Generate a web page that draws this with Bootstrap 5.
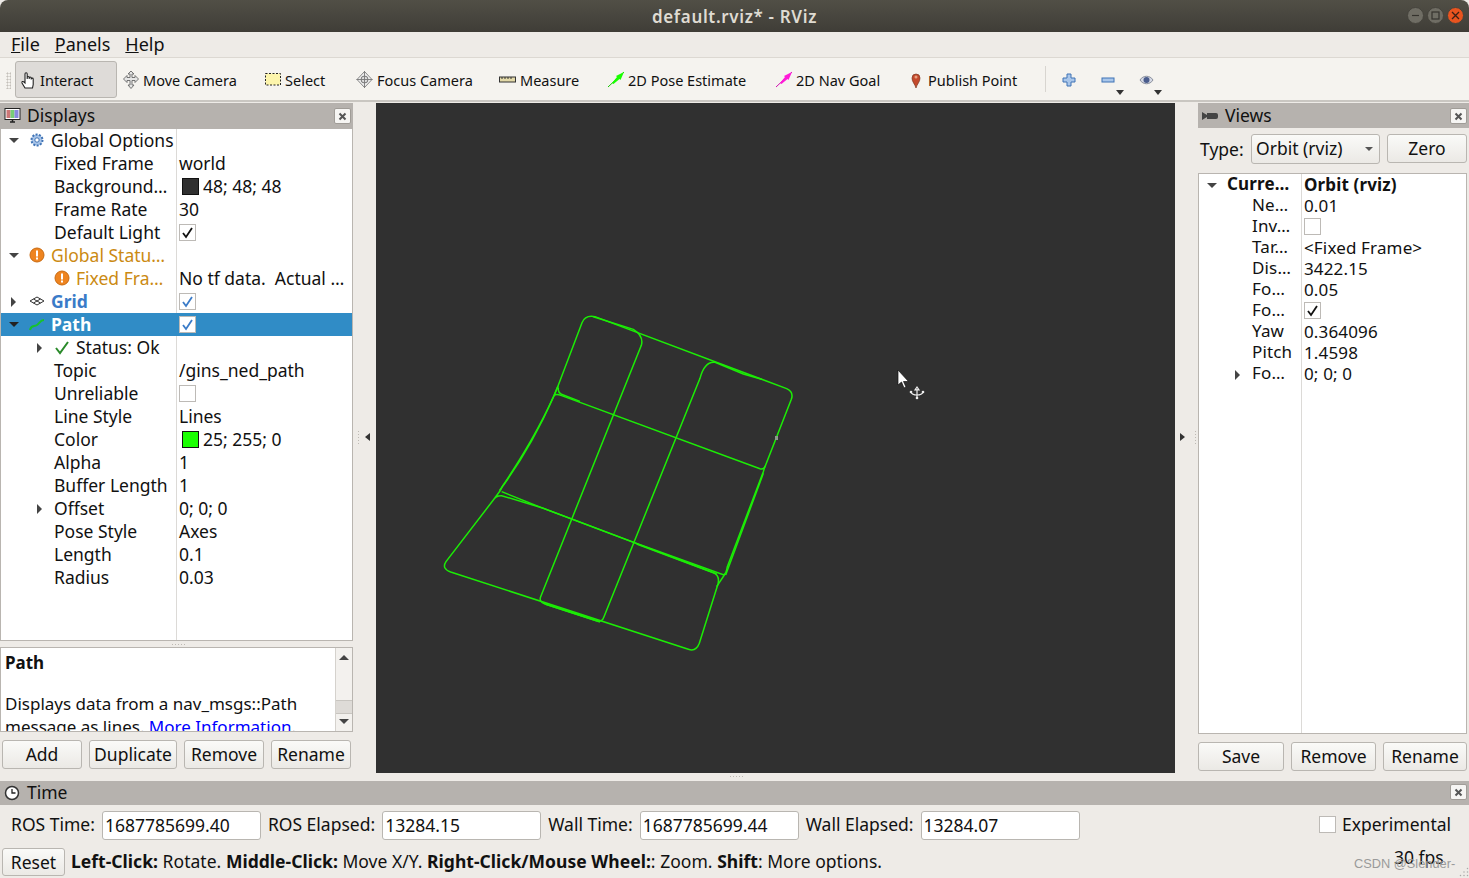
<!DOCTYPE html>
<html lang="en">
<head>
  <meta charset="UTF-8">
  <meta name="viewport" content="width=device-width, initial-scale=1.0">
  <title>default.rviz* - RViz</title>
  <link href="https://cdn.jsdelivr.net/npm/bootstrap@5.3.0/dist/css/bootstrap.min.css" rel="stylesheet">
  <style>
    html, body { height: 100%; }
    body { width: 1469px; height: 878px; overflow: hidden; background: #eeebe7; color: #111; font-family: "Noto Sans", "Open Sans", sans-serif; font-size: 17.5px; line-height: 23px; position: relative; }
    .win-title { height: 32px; background: linear-gradient(#514f46, #3f3d37); border-radius: 8px 8px 0 0; color: #dfdbd2; font-weight: 600; font-size: 17px; letter-spacing: .65px; position: relative; flex: none; }
    .win-btns { position: absolute; right: 5px; top: 7px; gap: 3px; }
    .win-btn { width: 17px; height: 17px; border-radius: 50%; background: #6f6d64; border: 1px solid #45433c; display: flex; align-items: center; justify-content: center; }
    .win-btn.shut { background: #e9541f; }
    .menu-bar { height: 26px; flex: none; padding-left: 11px; gap: 15px; font-size: 18px; border-bottom: 1px solid #dcd8d2; line-height: 25px; }
    .tool-bar { height: 44px; flex: none; background: #f5f3ef; border-bottom: 2px solid #c9c6c1; padding-left: 15px; font-size: 14.5px; }
    .tool-grip { position: absolute; left: 6px; top: 72px; width: 5px; height: 17px; background-image: radial-gradient(#c4c0ba 45%, transparent 50%); background-size: 3px 3px; }
    .tool-item { display: flex; align-items: center; flex: none; height: 37px; padding-top: 2px; }
    .tool-on { width: 102px; padding-left: 4px; margin-right: 6px; background: #dedbd8; border: 1px solid #b9b6b1; border-radius: 3px; }
    .tool-ico { width: 20px; height: 20px; flex: none; }
    .w-move { width: 142px; } .w-select { width: 91px; } .w-focus { width: 143px; } .w-measure { width: 108px; }
    .w-pose { width: 168px; } .w-nav { width: 133px; } .w-pin { width: 137px; }
    .w-focus span, .w-measure span, .w-pose span, .w-nav span { margin-left: 1px; }
    .tool-sep { width: 1px; height: 26px; background: #d8d5d0; margin-right: 16px; }
    .tool-small { width: 38px; height: 36px; position: relative; flex: none; }
    .tool-small .tool-ico { display: block; margin-top: 11px; }
    .drop-tri { position: absolute; right: 14px; bottom: 2px; width: 0; height: 0; border-left: 4px solid transparent; border-right: 4px solid transparent; border-top: 5px solid #333; }
    .work-area { height: 670px; flex: none; margin-top: 1px; }
    .dock-left { width: 353px; flex: none; }
    .dock-right { width: 271px; flex: none; }
    .dock-head { height: 26px; background: #b6b2ae; flex: none; position: relative; padding-left: 4px; padding-bottom: 2px; gap: 5px; font-size: 17.5px; line-height: 24px; }
    .dock-head svg { margin-top: 2px; }
    .head-views { height: 25px; }
    .dock-x { position: absolute; right: 2px; top: 5px; width: 17px; height: 16px; background: #f6f5f3; border: 1px solid #a09c97; border-radius: 2px; display: flex; align-items: center; justify-content: center; }
    .dock-x svg { margin: 0; }
    .prop-tree { background: #fff; border: 1px solid #b9b5b0; position: relative; }
    .tree-left { height: 512px; border-top: 0; }
    .tree-left::before, .tree-right::before { content: ""; position: absolute; top: 0; bottom: 0; width: 1px; background: #dcdad7; }
    .tree-left::before { left: 175px; }
    .tree-right::before { left: 102px; }
    .prop-row { display: flex; align-items: center; height: 23px; position: relative; white-space: nowrap; }
    .tree-right .prop-row { height: 21px; font-size: 17px; letter-spacing: .15px; }
    .prop-name { width: 176px; flex: none; position: relative; height: 100%; padding-left: 53px; line-height: 22px; }
    .tree-right .prop-name { width: 103px; padding-left: 53px; line-height: 20px; }
    .prop-val { padding-left: 2px; padding-bottom: 1px; display: flex; align-items: center; gap: 4px; }
    .lvl-top { padding-left: 50px; }
    .lvl-deep { padding-left: 75px; }
    .tree-right .lvl-top { padding-left: 28px; }
    .tree-tri { position: absolute; width: 0; height: 0; }
    .tri-down { left: 8px; top: 9px; border-left: 5px solid transparent; border-right: 5px solid transparent; border-top: 5px solid #444; }
    .tri-right { left: 10px; top: 7px; border-top: 5px solid transparent; border-bottom: 5px solid transparent; border-left: 5px solid #444; }
    .tri-deep { left: 36px; }
    .tree-ico { position: absolute; left: 28px; top: 3px; width: 17px; height: 17px; }
    .ico-deep { left: 53px; }
    .warn-txt { color: #cb8a12; }
    .grid-txt { color: #3a7bc8; font-weight: 700; }
    .row-on { background: #308cc6; color: #fff; font-weight: 700; }
    .row-on .tri-down { border-top-color: #222; }
    .chk-box { width: 17px; height: 17px; background: #fff; border: 1px solid #bdbab6; display: inline-flex; align-items: center; justify-content: center; }
    .prop-val .chk-box { margin-bottom: -1px; }
    .swatch { width: 17px; height: 17px; border: 1px solid #111; margin-left: 3px; margin-bottom: -1px; }
    .desc-box { height: 85px; margin-top: 6px; background: #fff; border: 1px solid #b9b5b0; position: relative; overflow: hidden; padding: 3px 4px; font-size: 17px; }
    .desc-box p { margin: 0; }
    .desc-gap { margin-top: 18px !important; }
    .desc-box a { color: #0000ff; text-decoration: none; }
    .scroll-col { position: absolute; right: 0; top: 0; bottom: 0; width: 17px; background: #f3f1ee; border-left: 1px solid #d5d2cd; }
    .scroll-thumb { position: absolute; left: 0; right: 0; top: 52px; height: 14px; background: #dedbd7; border-top: 1px solid #c8c5c0; border-bottom: 1px solid #c8c5c0; }
    .scroll-up, .scroll-dn { position: absolute; left: 3px; width: 0; height: 0; border-left: 5px solid transparent; border-right: 5px solid transparent; }
    .scroll-up { top: 7px; border-bottom: 5px solid #444; }
    .scroll-dn { bottom: 7px; border-top: 5px solid #444; }
    .rv-btn { background: linear-gradient(#fafaf8, #ebe9e5); border: 1px solid #b9b6b1; border-radius: 3px; padding: 0 0 1px; color: #111; font-size: 17.5px; line-height: 26px; height: 29px; flex: none; }
    .btn-row-left { margin-top: 8px; padding-left: 2px; gap: 7px; }
    .w-add { width: 80px; } .w-dup { width: 88px; } .w-rem { width: 80px; } .w-ren { width: 80px; }
    .centre-gap { width: 23px; flex: none; position: relative; }
    .side-arrow { position: absolute; top: 330px; width: 0; height: 0; border-top: 4px solid transparent; border-bottom: 4px solid transparent; }
    .arrow-l { left: 12px; border-right: 5px solid #333; }
    .arrow-r { left: 5px; border-left: 5px solid #333; }
    .grip-v { position: absolute; top: 327px; width: 3px; height: 15px; background-image: radial-gradient(#bdb9b3 40%, transparent 45%); background-size: 3px 3px; }
    .grip-left { left: 4px; }
    .grip-right { left: 19px; }
    .grip-h { position: absolute; width: 15px; height: 3px; background-image: radial-gradient(#bdb9b3 40%, transparent 45%); background-size: 3px 3px; }
    .grip-tree { left: 171px; top: 643px; }
    .grip-time { left: 729px; top: 775px; }
    .size-grip { position: absolute; right: 0; bottom: 0; }
    .canvas-3d { width: 799px; flex: none; background: #303030; }
    .canvas-3d svg { display: block; }
    .type-row { height: 45px; padding: 6px 2px 0 2px; flex: none; }
    .type-row label { width: 51px; }
    .orbit-box { width: 129px; height: 30px; background: linear-gradient(#fafaf8, #ebe9e5); border: 1px solid #b9b6b1; border-radius: 3px; padding-left: 4px; line-height: 26px; position: relative; }
    .orbit-tri { position: absolute; right: 6px; top: 12px; width: 0; height: 0; border-left: 4px solid transparent; border-right: 4px solid transparent; border-top: 4px solid #555; }
    .w-zero { width: 80px; margin-left: 7px; }
    .tree-right { height: 561px; width: 269px; margin-bottom: 8px; }
    .btn-row-right { gap: 7px; }
    .w-save { width: 86px; } .w-rem2 { width: 85px; } .w-ren2 { width: 84px; }
    .time-head { margin-top: 8px; height: 24px; line-height: 22px; }
    .time-head .dock-x { top: 3px; }
    .time-row { height: 40px; flex: none; padding-left: 11px; gap: 7px; position: relative; }
    .time-row label { flex: none; margin-bottom: 1px; }
    .time-input { width: 159px; height: 29px; flex: none; background: #fff; border: 1px solid #b9b6b1; border-radius: 3px; padding: 0 2px 1px; font-size: 17.5px; line-height: 26px; color: #111; box-shadow: none; }
    .time-input:focus { box-shadow: none; border-color: #b9b6b1; }
    .exp-box { position: absolute; left: 1319px; top: 8px; }
    .exp-box .chk-box { margin: 0 6px 0 0; }
    .status-row { height: 33px; flex: none; padding-left: 2px; position: relative; }
    .status-text { letter-spacing: .03px; margin-bottom: 1px; }
    .w-reset { width: 63px; height: 28px; margin-right: 6px; }
    .fps-txt { position: absolute; left: 1394px; top: 1px; }
    .mark-txt { position: absolute; left: 1354px; top: 7px; font-family: "Liberation Sans", sans-serif; font-size: 12.8px; color: #9a9a9a; white-space: nowrap; }
  </style>
</head>
<body class="d-flex flex-column">

  <div class="win-title d-flex align-items-center justify-content-center">
    default.rviz* - RViz
    <div class="win-btns d-flex">
      <span class="win-btn"><svg width="9" height="9"><path d="M1 4.500h7" stroke="#35332e" stroke-width="1.200"/></svg></span>
      <span class="win-btn"><svg width="9" height="9"><rect x="1" y="1" width="7" height="7" fill="none" stroke="#35332e" stroke-width="1.200"/></svg></span>
      <span class="win-btn shut"><svg width="9" height="9"><path d="M1 1l7 7M8 1l-7 7" stroke="#3a2015" stroke-width="1.300"/></svg></span>
    </div>
  </div>

  <div class="menu-bar d-flex align-items-center">
    <span><u>F</u>ile</span><span><u>P</u>anels</span><span><u>H</u>elp</span>
  </div>

  <div class="tool-bar d-flex align-items-center">
    <div class="tool-item tool-on">
      <svg class="tool-ico" viewBox="0 0 20 20"><path d="M5 18l-3-5c-.5-1.500 1-2 2-1l1 1V4c0-1.600 2.200-1.600 2.200 0v5-1.500c0-1.300 2-1.300 2 0V9 8c0-1.300 2-1.300 2 0v1.500-.5c0-1.200 2-1.200 2 0v5.500l-.7 3.500z" fill="#fff" stroke="#222" stroke-width="1.100"/></svg>
      <span>Interact</span>
    </div>
    <div class="tool-item w-move">
      <svg class="tool-ico" viewBox="0 0 20 20"><path d="M8 1l3 3H9v3.500h3V5.500l3.500 3.500-3.500 3.500v-2H9V15h2l-3 3.500L5 15h2v-4.500H4v2L.5 9 4 5.500v2h3V4H5z" fill="#e6e6e6" stroke="#666" stroke-width=".9"/></svg>
      <span>Move Camera</span>
    </div>
    <div class="tool-item w-select">
      <svg class="tool-ico" viewBox="0 0 20 20"><rect x=".5" y="3.500" width="15" height="11.500" fill="#fdf5ac" stroke="#222" stroke-dasharray="2 1.500"/></svg>
      <span>Select</span>
    </div>
    <div class="tool-item w-focus">
      <svg class="tool-ico" viewBox="0 0 20 20"><path d="M8.500 1.500L16 9.500 8.500 17.500 1 9.500z" fill="#eee" stroke="#888"/><circle cx="8.500" cy="9.500" r="3.500" fill="#ddd" stroke="#777"/><path d="M8.500 1v17M.5 9.500h16" stroke="#777" stroke-width=".9"/></svg>
      <span>Focus Camera</span>
    </div>
    <div class="tool-item w-measure">
      <svg class="tool-ico" viewBox="0 0 20 20"><rect x=".5" y="7" width="16" height="5" fill="#e3d9a8" stroke="#333"/><path d="M3 7v2M6 7v2M9 7v2M12 7v2" stroke="#333"/></svg>
      <span>Measure</span>
    </div>
    <div class="tool-item w-pose">
      <svg class="tool-ico" viewBox="0 0 20 20"><path d="M1 17L17 2" stroke="#12c400" stroke-width="1"/><path d="M5 13l5-6-1-1 8-4-3.500 8-1-1-6 5z" fill="#19ff00"/></svg>
      <span>2D Pose Estimate</span>
    </div>
    <div class="tool-item w-nav">
      <svg class="tool-ico" viewBox="0 0 20 20"><path d="M1 17L17 2" stroke="#d010b0" stroke-width="1"/><path d="M5 13l5-6-1-1 8-4-3.500 8-1-1-6 5z" fill="#ff19d8"/></svg>
      <span>2D Nav Goal</span>
    </div>
    <div class="tool-item w-pin">
      <svg class="tool-ico" viewBox="0 0 20 20"><path d="M8 18c-1-4-4-6-4-10a4 4 0 0 1 8 0c0 4-3 6-4 10z" fill="#c4492c" stroke="#7d3a22" stroke-width=".7"/><circle cx="8" cy="7" r="1.500" fill="#e8a080"/></svg>
      <span>Publish Point</span>
    </div>
    <div class="tool-sep"></div>
    <div class="tool-small">
      <svg class="tool-ico" viewBox="0 0 20 20"><path d="M5 2h4v4h4v4H9v4H5v-4H1V6h4z" fill="#a9c6ea" stroke="#3f73b5"/></svg>
    </div>
    <div class="tool-small">
      <svg class="tool-ico" viewBox="0 0 20 20"><rect x="2" y="6" width="12" height="4" fill="#a9c6ea" stroke="#3f73b5"/></svg>
      <span class="drop-tri"></span>
    </div>
    <div class="tool-small">
      <svg class="tool-ico" viewBox="0 0 20 20"><path d="M2 8c3-5 10-5 13 0-3 5-10 5-13 0z" fill="#d4d8e4" stroke="#8a8f9c"/><circle cx="8.500" cy="8" r="3" fill="#4a5c8c"/></svg>
      <span class="drop-tri"></span>
    </div>
  </div>

  <div class="tool-grip"></div>
  <div class="grip-h grip-tree"></div>
  <div class="grip-h grip-time"></div>

  <div class="work-area d-flex">
    <div class="dock-left d-flex flex-column">
      <div class="dock-head d-flex align-items-center">
        <svg width="18" height="18" viewBox="0 0 18 18"><rect x="1" y="1.500" width="15" height="11" fill="#fff" stroke="#222"/><rect x="2.500" y="3" width="4" height="8" fill="#c77"/><rect x="6.500" y="3" width="4" height="8" fill="#7c7"/><rect x="10.500" y="3" width="4" height="8" fill="#88d"/><path d="M6 15h5M8.500 12.500V15" stroke="#222" stroke-width="1.500"/></svg>
        <span>Displays</span>
        <span class="dock-x"><svg width="9" height="9"><path d="M1.500 1.500l6 6M7.500 1.500l-6 6" stroke="#555" stroke-width="2"/></svg></span>
      </div>
      <div class="prop-tree tree-left">
        <div class="prop-row"><div class="prop-name lvl-top"><span class="tree-tri tri-down"></span>
          <svg class="tree-ico" viewBox="0 0 17 17"><circle cx="8" cy="8" r="5.500" fill="#a8c4e8" stroke="#3f73b5" stroke-width="2" stroke-dasharray="2 1.400"/><circle cx="8" cy="8" r="2.200" fill="#fff" stroke="#3f73b5"/></svg>Global Options</div></div>
        <div class="prop-row"><div class="prop-name">Fixed Frame</div><div class="prop-val">world</div></div>
        <div class="prop-row"><div class="prop-name">Background…</div><div class="prop-val"><span class="swatch" style="background:#303030"></span>48; 48; 48</div></div>
        <div class="prop-row"><div class="prop-name">Frame Rate</div><div class="prop-val">30</div></div>
        <div class="prop-row"><div class="prop-name">Default Light</div><div class="prop-val"><span class="chk-box"><svg width="13" height="13"><path d="M2 7l3 4 6-9" fill="none" stroke="#111" stroke-width="1.800"/></svg></span></div></div>
        <div class="prop-row"><div class="prop-name lvl-top warn-txt"><span class="tree-tri tri-down"></span>
          <svg class="tree-ico" viewBox="0 0 17 17"><circle cx="8" cy="8" r="7" fill="#ee8420" stroke="#c96a10"/><rect x="7" y="3.500" width="2" height="6" fill="#fff"/><rect x="7" y="10.500" width="2" height="2" fill="#fff"/></svg>Global Statu…</div></div>
        <div class="prop-row"><div class="prop-name lvl-deep warn-txt">
          <svg class="tree-ico ico-deep" viewBox="0 0 17 17"><circle cx="8" cy="8" r="7" fill="#ee8420" stroke="#c96a10"/><rect x="7" y="3.500" width="2" height="6" fill="#fff"/><rect x="7" y="10.500" width="2" height="2" fill="#fff"/></svg>Fixed Fra…</div><div class="prop-val">No tf data.&nbsp; Actual …</div></div>
        <div class="prop-row"><div class="prop-name lvl-top grid-txt"><span class="tree-tri tri-right"></span>
          <svg class="tree-ico" viewBox="0 0 17 17"><path d="M1 8l7-4 7 4-7 4zM4.500 6l7 4M11.500 6l-7 4" fill="none" stroke="#333"/></svg>Grid</div><div class="prop-val"><span class="chk-box"><svg width="13" height="13"><path d="M2 7l3 4 6-9" fill="none" stroke="#3a7bc8" stroke-width="1.800"/></svg></span></div></div>
        <div class="prop-row row-on"><div class="prop-name lvl-top"><span class="tree-tri tri-down"></span>
          <svg class="tree-ico" viewBox="0 0 17 17"><path d="M1 14c1-5 4-3 7-5s3-5 7-5" fill="none" stroke="#17c22c" stroke-width="2"/></svg>Path</div><div class="prop-val"><span class="chk-box"><svg width="13" height="13"><path d="M2 7l3 4 6-9" fill="none" stroke="#3a7bc8" stroke-width="1.800"/></svg></span></div></div>
        <div class="prop-row"><div class="prop-name lvl-deep"><span class="tree-tri tri-right tri-deep"></span>
          <svg class="tree-ico ico-deep" viewBox="0 0 17 17"><path d="M2 9l4 5 8-11" fill="none" stroke="#2a8a2a" stroke-width="2"/></svg>Status: Ok</div></div>
        <div class="prop-row"><div class="prop-name">Topic</div><div class="prop-val">/gins_ned_path</div></div>
        <div class="prop-row"><div class="prop-name">Unreliable</div><div class="prop-val"><span class="chk-box"></span></div></div>
        <div class="prop-row"><div class="prop-name">Line Style</div><div class="prop-val">Lines</div></div>
        <div class="prop-row"><div class="prop-name">Color</div><div class="prop-val"><span class="swatch" style="background:#19ff00"></span>25; 255; 0</div></div>
        <div class="prop-row"><div class="prop-name">Alpha</div><div class="prop-val">1</div></div>
        <div class="prop-row"><div class="prop-name">Buffer Length</div><div class="prop-val">1</div></div>
        <div class="prop-row"><div class="prop-name"><span class="tree-tri tri-right tri-deep"></span>Offset</div><div class="prop-val">0; 0; 0</div></div>
        <div class="prop-row"><div class="prop-name">Pose Style</div><div class="prop-val">Axes</div></div>
        <div class="prop-row"><div class="prop-name">Length</div><div class="prop-val">0.1</div></div>
        <div class="prop-row"><div class="prop-name">Radius</div><div class="prop-val">0.03</div></div>
      </div>
      <div class="desc-box">
        <p class="fw-bold">Path</p>
        <p class="desc-gap">Displays data from a nav_msgs::Path<br>message as lines. <a href="#">More Information</a>.</p>
        <div class="scroll-col"><span class="scroll-up"></span><span class="scroll-thumb"></span><span class="scroll-dn"></span></div>
      </div>
      <div class="btn-row-left d-flex">
        <button class="btn rv-btn w-add">Add</button>
        <button class="btn rv-btn w-dup">Duplicate</button>
        <button class="btn rv-btn w-rem">Remove</button>
        <button class="btn rv-btn w-ren">Rename</button>
      </div>
    </div>

    <div class="centre-gap"><span class="side-arrow arrow-l"></span><span class="grip-v grip-left"></span></div>

    <div class="canvas-3d">
      <svg width="799" height="670" viewBox="376 103 799 670">
        <g transform="translate(430 300) scale(.33333)" fill="none" stroke="#1cec06" stroke-width="4.500">
          <path d="M190 600Q198 586 215 587L340 625L850 818Q870 826 864 852L808 1030Q798 1056 775 1048L62 816Q34 806 48 785L190 600L212 570"/>
          <path d="M208 572Q300 450 372 288L384 258L456 68Q466 44 495 50L1070 266Q1092 276 1084 298L1007 495Q1003 510 990 506L395 287Q376 280 372 288"/>
          <path d="M215 575L340 625L620 730L880 824Q888 824 892 800L1000 515L1005 498"/>
          <path d="M490 50L610 88Q642 108 634 136L332 890Q326 906 345 912L500 962Q516 968 522 950L810 235Q824 183 855 187L940 222L995 238"/>
          <path d="M384 258Q330 390 218 558L212 570"/>
          <path d="M887 825L1000 520M860 860L885 822"/>
          <path d="M345 912L510 966M620 732L860 822"/>
          <path d="M385 262Q382 280 400 285L450 304"/>
        </g>
        <rect x="775" y="436" width="3" height="4" fill="#8a9a8a"/>
        <path d="M898 370v15l3.500-3 2.500 6 2-1-2.500-5.500h5z" fill="#fff" stroke="#111" stroke-width=".7"/>
        <path d="M917 389v9M911 392q1 3 6 3t6-3M917 387l-2 3h4z" fill="none" stroke="#eee" stroke-width="1.200"/>
        <circle cx="917" cy="398" r="1.300" fill="#eee"/><circle cx="911" cy="392" r="1.300" fill="#eee"/><circle cx="923" cy="392" r="1.300" fill="#eee"/>
      </svg>
    </div>

    <div class="centre-gap"><span class="side-arrow arrow-r"></span><span class="grip-v grip-right"></span></div>

    <div class="dock-right d-flex flex-column">
      <div class="dock-head head-views d-flex align-items-center">
        <svg width="18" height="18" viewBox="0 0 18 18"><path d="M0 5l5 3V6h9a2 2 0 0 1 2 2v2a2 2 0 0 1-2 2H5v-2l-5 3z" fill="#444"/></svg>
        <span>Views</span>
        <span class="dock-x"><svg width="9" height="9"><path d="M1.500 1.500l6 6M7.500 1.500l-6 6" stroke="#555" stroke-width="2"/></svg></span>
      </div>
      <div class="type-row d-flex align-items-start">
        <label class="pt-1">Type:</label>
        <div class="orbit-box">Orbit (rviz)<span class="orbit-tri"></span></div>
        <button class="btn rv-btn w-zero">Zero</button>
      </div>
      <div class="prop-tree tree-right">
        <div class="prop-row fw-bold"><div class="prop-name lvl-top"><span class="tree-tri tri-down"></span>Curre…</div><div class="prop-val">Orbit (rviz)</div></div>
        <div class="prop-row"><div class="prop-name">Ne…</div><div class="prop-val">0.01</div></div>
        <div class="prop-row"><div class="prop-name">Inv…</div><div class="prop-val"><span class="chk-box"></span></div></div>
        <div class="prop-row"><div class="prop-name">Tar…</div><div class="prop-val">&lt;Fixed Frame&gt;</div></div>
        <div class="prop-row"><div class="prop-name">Dis…</div><div class="prop-val">3422.15</div></div>
        <div class="prop-row"><div class="prop-name">Fo…</div><div class="prop-val">0.05</div></div>
        <div class="prop-row"><div class="prop-name">Fo…</div><div class="prop-val"><span class="chk-box"><svg width="13" height="13"><path d="M2 7l3 4 6-9" fill="none" stroke="#111" stroke-width="1.800"/></svg></span></div></div>
        <div class="prop-row"><div class="prop-name">Yaw</div><div class="prop-val">0.364096</div></div>
        <div class="prop-row"><div class="prop-name">Pitch</div><div class="prop-val">1.4598</div></div>
        <div class="prop-row"><div class="prop-name"><span class="tree-tri tri-right tri-deep"></span>Fo…</div><div class="prop-val">0; 0; 0</div></div>
      </div>
      <div class="btn-row-right d-flex">
        <button class="btn rv-btn w-save">Save</button>
        <button class="btn rv-btn w-rem2">Remove</button>
        <button class="btn rv-btn w-ren2">Rename</button>
      </div>
    </div>
  </div>

  <div class="dock-head time-head d-flex align-items-center">
    <svg width="18" height="18" viewBox="0 0 18 18"><circle cx="8" cy="9" r="6.500" fill="#fff" stroke="#333" stroke-width="1.500"/><path d="M8 5v4h3.500" fill="none" stroke="#222" stroke-width="1.300"/></svg>
    <span>Time</span>
    <span class="dock-x"><svg width="9" height="9"><path d="M1.500 1.500l6 6M7.500 1.500l-6 6" stroke="#555" stroke-width="2"/></svg></span>
  </div>

  <div class="time-row d-flex align-items-center">
    <label>ROS Time:</label><input class="form-control time-input" value="1687785699.40">
    <label>ROS Elapsed:</label><input class="form-control time-input" value="13284.15">
    <label>Wall Time:</label><input class="form-control time-input" value="1687785699.44">
    <label>Wall Elapsed:</label><input class="form-control time-input" value="13284.07">
    <div class="exp-box d-flex align-items-center"><span class="chk-box"></span>Experimental</div>
  </div>

  <div class="status-row d-flex align-items-center">
    <button class="btn rv-btn w-reset">Reset</button>
    <span class="status-text"><b>Left-Click:</b> Rotate. <b>Middle-Click:</b> Move X/Y. <b>Right-Click/Mouse Wheel:</b>: Zoom. <b>Shift</b>: More options.</span>
    <span class="fps-txt">30 fps</span>
    <span class="mark-txt">CSDN @Slender-</span>
    <svg class="size-grip" width="11" height="11"><path d="M9.500 1.500v0M6 5v0M9.500 5v0M2.500 8.500v0M6 8.500v0M9.500 8.500v0" stroke="#aaa" stroke-width="1.500" stroke-linecap="round"/></svg>
  </div>

  <script src="https://cdn.jsdelivr.net/npm/bootstrap@5.3.0/dist/js/bootstrap.bundle.min.js"></script>
</body>
</html>
